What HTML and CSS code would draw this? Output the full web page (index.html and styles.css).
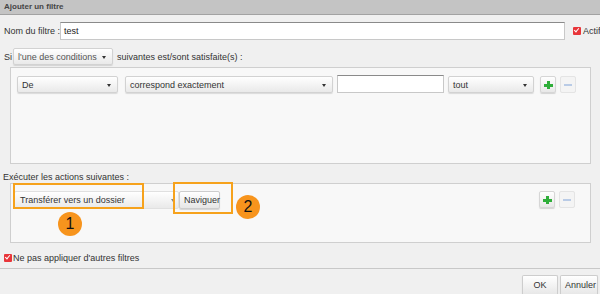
FILE: index.html
```html
<!DOCTYPE html>
<html>
  <head>
    <meta charset="UTF-8">
    <title>Ajouter un filtre</title>
    <link rel="stylesheet" href="styles.css">
  </head>
  <body>
    <div class="dialog">
      <div class="titleBar">Ajouter un filtre</div>

      <div class="nameRow">
        <span class="label">Nom du filtre :</span>
        <div class="textInput nameInput">test</div>
        <span class="check"></span>
        <span class="label">Actif</span>
      </div>

      <div class="siRow">
        <span class="label">Si</span>
        <div class="select anySelect">l'une des conditions<span class="arrow"></span></div>
        <span class="label">suivantes est/sont satisfaite(s) :</span>
      </div>

      <div class="box condBox">
        <div class="line">
          <div class="select fromSelect">De<span class="arrow"></span></div>
          <div class="select matchSelect">correspond exactement<span class="arrow"></span></div>
          <div class="textInput valueInput"></div>
          <div class="select allSelect">tout<span class="arrow"></span></div>
          <div class="iconBtn"><span class="plus"></span></div>
          <div class="iconBtn off"><span class="minus"></span></div>
        </div>
      </div>

      <div class="actionsLabel">Exécuter les actions suivantes :</div>

      <div class="box actBox">
        <div class="line">
          <div class="select moveSelect">Transférer vers un dossier<span class="arrow small"></span></div>
          <div class="button browse">Naviguer</div>
          <div class="spacer"></div>
          <div class="iconBtn"><span class="plus"></span></div>
          <div class="iconBtn off"><span class="minus"></span></div>
        </div>
        <!-- callouts -->
        <div class="mark mark1"></div>
        <div class="bubble bubble1">1</div>
        <div class="mark mark2"></div>
        <div class="bubble bubble2">2</div>
      </div>

      <div class="stopRow">
        <span class="check"></span>
        <span class="label">Ne pas appliquer d'autres filtres</span>
      </div>

      <div class="footer">
        <div class="button okBtn">OK</div>
        <div class="button cancelBtn">Annuler</div>
      </div>
    </div>
  </body>
</html>
```

FILE: styles.css
```css
body {
    margin: 0;
    background-color: #f0f0f0;
    font-family: "Liberation Sans", Arial, sans-serif;
    font-size: 9px;
    color: #333;
}
.dialog {
    width: 600px;
    height: 294px;
    overflow: hidden;
}
.titleBar {
    height: 14px;
    line-height: 13px;
    padding-left: 4px;
    background-color: #c4c4c4;
    border-bottom: 1px solid #a2a2a2;
    font-size: 8px;
    font-weight: bold;
    color: #444;
}
.label {
    white-space: nowrap;
}
.nameRow {
    display: flex;
    align-items: center;
    margin-top: 7px;
    padding-left: 4px;
    width: 620px;
}
.nameRow .label:first-child {
    width: 56px;
}
.textInput {
    box-sizing: border-box;
    height: 18px;
    line-height: 16px;
    padding-left: 3px;
    background-color: #fff;
    border: 1px solid #c8c8c8;
    border-top-color: #8a8a8a;
    color: #222;
}
.nameInput {
    width: 505px;
    margin-right: 8px;
}
.check {
    display: inline-block;
    width: 8px;
    height: 8px;
    margin-right: 2px;
    background-color: #e8353a;
    border-radius: 1px;
    position: relative;
}
.check::after {
    content: "";
    position: absolute;
    left: 2px;
    top: 0px;
    width: 2px;
    height: 4px;
    border: solid #fff;
    border-width: 0 1px 1px 0;
    transform: rotate(40deg);
}
.siRow {
    display: flex;
    align-items: center;
    margin-top: 8px;
    padding-left: 4px;
}
.siRow .label:first-child {
    width: 9px;
}
.select {
    box-sizing: border-box;
    position: relative;
    height: 17px;
    line-height: 16px;
    padding-left: 4px;
    background: linear-gradient(#ffffff, #e9e9e9);
    border: 1px solid #d2d2d2;
    border-radius: 2px;
    box-shadow: 0 1px 1px rgba(0,0,0,0.12);
    color: #333;
    white-space: nowrap;
}
.arrow {
    position: absolute;
    right: 6px;
    top: 7px;
    border-style: solid;
    border-width: 3px 2px 0 2px;
    border-color: #333 transparent transparent transparent;
}
.arrow.small {
    right: 3px;
    border-color: #888 transparent transparent transparent;
}
.anySelect {
    width: 100px;
    margin-right: 4px;
    color: #555;
}
.box {
    position: relative;
    box-sizing: border-box;
    width: 581px;
    margin-left: 10px;
    background-color: #f8f8f8;
    border: 1px solid #cfcfcf;
}
.condBox {
    height: 97px;
    margin-top: 2px;
    padding: 7px 0 0 6px;
}
.line {
    display: flex;
    align-items: center;
}
.fromSelect {
    width: 101px;
    margin-right: 7px;
}
.matchSelect {
    width: 208px;
    margin-right: 4px;
}
.valueInput {
    width: 107px;
    height: 18px;
    margin-right: 4px;
}
.allSelect {
    width: 86px;
    margin-right: 6px;
}
.iconBtn {
    box-sizing: border-box;
    position: relative;
    width: 16px;
    height: 17px;
    margin-right: 4px;
    background: linear-gradient(#ffffff, #e8e8e8);
    border: 1px solid #d6d6d6;
    border-radius: 2px;
    box-shadow: 0 1px 1px rgba(0,0,0,0.15);
}
.iconBtn.off {
    background: #f4f4f4;
    border-color: #e4e4e4;
    box-shadow: none;
}
.plus::before, .plus::after {
    content: "";
    position: absolute;
    background-color: #2fae3a;
}
.plus::before {
    left: 6px;
    top: 4px;
    width: 3px;
    height: 8px;
}
.plus::after {
    left: 3px;
    top: 7px;
    width: 9px;
    height: 3px;
}
.minus {
    position: absolute;
    left: 3px;
    top: 7px;
    width: 8px;
    height: 2px;
    background-color: #b9cbe6;
}
.actionsLabel {
    margin-top: 8px;
    padding-left: 3px;
    height: 11px;
    line-height: 11px;
}
.actBox {
    height: 60px;
    padding: 7px 11px 0 3px;
}
.actBox .line {
    align-items: flex-start;
}
.moveSelect {
    width: 165px;
    height: 18px;
    line-height: 17px;
    border-color: #e0e0e0;
    box-shadow: none;
    padding-left: 5px;
}
.button {
    box-sizing: border-box;
    height: 18px;
    line-height: 16px;
    padding: 0 4px;
    background: linear-gradient(#ffffff, #e6e6e6);
    border: 1px solid #cdcdcd;
    border-radius: 2px;
    box-shadow: 0 1px 1px rgba(0,0,0,0.15);
    color: #333;
    text-align: center;
}
.browse {
    width: 41px;
}
.spacer {
    flex: 1;
}
.mark {
    position: absolute;
    box-sizing: border-box;
    border: 2px solid #f6a21c;
}
.mark1 {
    left: 2px;
    top: -1px;
    width: 131px;
    height: 26px;
}
.mark2 {
    left: 162px;
    top: -2px;
    width: 60px;
    height: 32px;
}
.bubble {
    position: absolute;
    width: 24px;
    height: 24px;
    border-radius: 50%;
    background-color: #f7941d;
    color: #111;
    font-size: 16px;
    line-height: 24px;
    text-align: center;
}
.bubble1 {
    left: 47px;
    top: 28px;
}
.bubble2 {
    left: 225px;
    top: 11px;
}
.stopRow {
    display: flex;
    align-items: center;
    margin-top: 10px;
    padding-left: 4px;
    height: 9px;
}
.stopRow .check {
    margin-right: 1px;
}
.footer {
    display: flex;
    justify-content: flex-end;
    gap: 2px;
    margin-top: 6px;
    padding: 6px 2px 0 0;
    border-top: 1px solid #c8c8c8;
}
.button.okBtn {
    width: 36px;
    height: 20px;
    line-height: 19px;
    border-radius: 2px 2px 0 0;
    border-bottom: none;
}
.button.cancelBtn {
    width: 38px;
    height: 20px;
    line-height: 19px;
    border-radius: 2px 2px 0 0;
    border-bottom: none;
}
```
